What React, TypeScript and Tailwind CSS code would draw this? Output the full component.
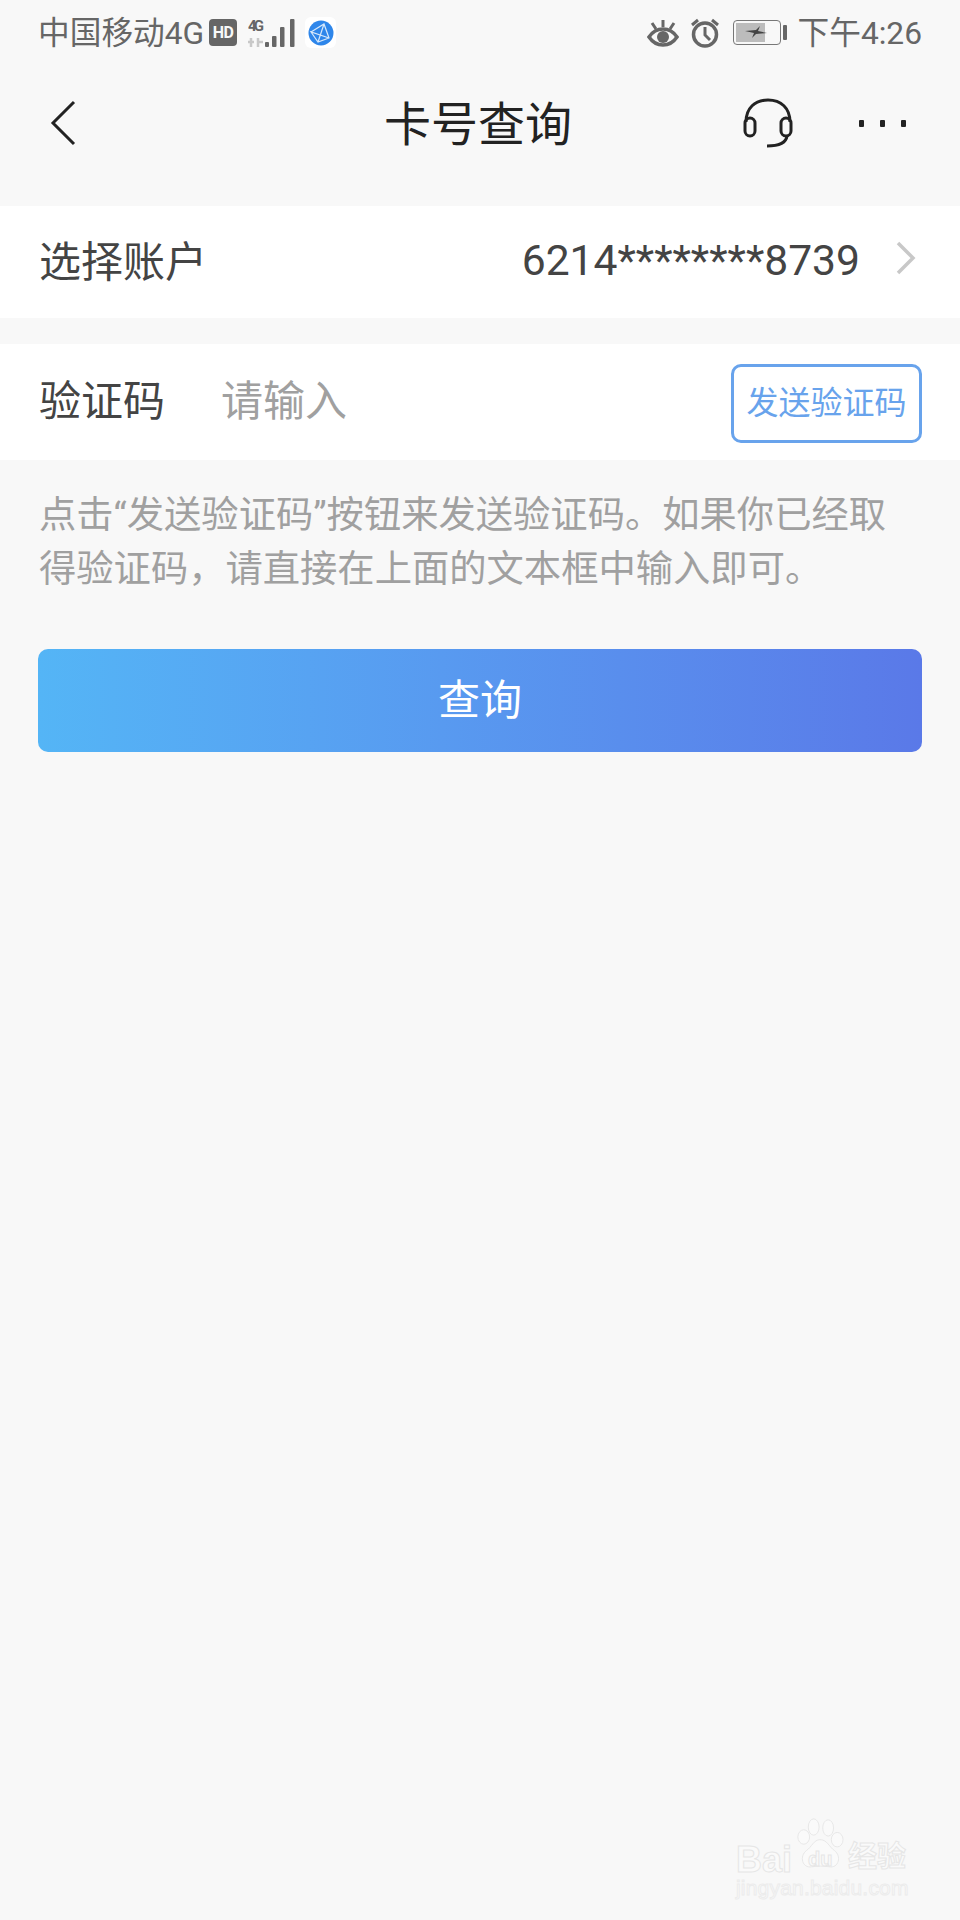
const cjk = "font-['Roboto','Noto_Sans_CJK_SC',sans-serif]"

function StatusLeft() {
  return (
    <div className="flex items-center">
      <span className="pt-[2px] text-[31.7px] leading-none text-[#666]">中国移动4G</span>
      <span className="ml-[5px] flex h-[27px] w-[28px] items-center justify-center rounded-[4px] bg-[#666] text-[16px] leading-none font-bold tracking-[-0.5px] text-[#f8f8f8]">
        HD
      </span>
      {/* signal */}
      <svg width="48" height="30" viewBox="0 0 48 30" className="ml-[11px]">
        <text x="0" y="13" fontSize="15" fontWeight="700" fill="#666" fontFamily="Roboto" textLength="16">4G</text>
        <path d="M3 20v9M0 24h6M10 20v9M10 24h5" stroke="#c8c8c8" strokeWidth="2.5" fill="none" />
        <rect x="17" y="24" width="4" height="5" rx="1" fill="#666" />
        <rect x="24" y="18" width="4.5" height="11" rx="1" fill="#666" />
        <rect x="32" y="9" width="4.5" height="20" rx="1" fill="#666" />
        <rect x="42" y="1" width="4.5" height="28" rx="1" fill="#666" />
      </svg>
      {/* browser app icon */}
      <span className="ml-[9px] flex h-[31px] w-[31px] items-center justify-center rounded-[6px] bg-white">
        <svg width="26" height="26" viewBox="0 0 26 26">
          <circle cx="13" cy="13" r="12.5" fill="#2e86ea" />
          <path d="M3 12L16 4L21 18L10 22L3 12L21 18M16 4L10 22" stroke="#d6e8fb" strokeWidth="1.2" fill="none" />
        </svg>
      </span>
    </div>
  )
}

function StatusRight() {
  return (
    <div className="flex items-center">
      <svg width="32" height="28" viewBox="0 0 32 28" fill="none" stroke="#666">
        <path d="M2 18C6 12 11 10 16 10C21 10 26 12 30 18C26 24 21 26 16 26C11 26 6 24 2 18Z" strokeWidth="3.5" />
        <circle cx="16" cy="18" r="6" fill="#666" stroke="none" />
        <path d="M16 1V8M5 4L9 10M27 4L23 10" strokeWidth="3" />
      </svg>
      <svg width="30" height="30" viewBox="0 0 30 30" fill="none" stroke="#666" className="ml-[11px]">
        <circle cx="15" cy="16.5" r="11.5" strokeWidth="3.5" />
        <path d="M15 9V17L20 22" strokeWidth="3" />
        <path d="M2 7L8 2M28 7L22 2" strokeWidth="3" />
      </svg>
      <div className="ml-[13px] flex items-center">
        <div className="relative h-[25px] w-[48px] overflow-hidden rounded-[4px] border-[1.5px] border-[#777] p-[2px]">
          <div className="h-full w-[29px] bg-[#bcbcbc]" />
          <svg width="22" height="12" viewBox="0 0 22 12" className="absolute top-[5px] left-[11px]">
            <path d="M0 5L11 4L15 0L13 5L22 7L11 8L7 12L9 7Z" fill="#444" />
          </svg>
        </div>
        <div className="ml-[2px] h-[15px] w-[4px] rounded-[1px] bg-[#666]" />
      </div>
      <span className="ml-[11px] pt-[2px] text-[31.7px] leading-none text-[#666]">下午4:26</span>
    </div>
  )
}

function Watermark() {
  return (
    <div className="absolute top-[1815px] left-[736px] h-[90px] w-[176px] text-[#fafafa]">
      <div className="absolute top-[28px] left-0 text-[36px] leading-[33px] font-bold font-['Liberation_Sans'] [-webkit-text-stroke:1px_#e6e6e6]">
        Bai
      </div>
      <svg width="52" height="56" viewBox="0 0 56 62" className="absolute top-[3px] left-[58px]" fill="#fafafa" stroke="#e6e6e6" strokeWidth="1">
        <ellipse cx="10" cy="21" rx="6.5" ry="8" />
        <ellipse cx="21" cy="10" rx="6" ry="9" />
        <ellipse cx="37" cy="11" rx="6" ry="9" />
        <ellipse cx="47" cy="24" rx="6.5" ry="8" />
        <path d="M28 24C36 24 38 32 44 36C52 42 49 56 38 54C32 53 25 53 19 54C8 56 5 42 13 36C19 32 21 24 28 24Z" />
      </svg>
      <div className="absolute top-[34px] left-[72px] text-[20px] leading-none font-bold font-['Liberation_Sans'] [-webkit-text-stroke:1px_#e6e6e6]">
        du
      </div>
      <div className="absolute top-[28px] left-[112px] text-[29px] leading-none font-bold [-webkit-text-stroke:1px_#e6e6e6]">
        经验
      </div>
      <div className="absolute top-[62px] left-0 text-[21px] leading-none font-['Liberation_Sans'] tracking-[0.2px] [-webkit-text-stroke:1px_#ececec]">
        jingyan.baidu.com
      </div>
    </div>
  )
}

export default function App() {
  return (
    <div className={`relative h-[1920px] w-[960px] overflow-hidden bg-[#f8f8f8] ${cjk}`}>
      <div className="flex h-[66px] items-center justify-between pr-[38px] pl-[38px]">
        <StatusLeft />
        <StatusRight />
      </div>

      {/* nav */}
      <div className="flex h-[114px] items-center pr-[54px] pl-[50px]">
        <div className="flex flex-1 items-center">
          <svg width="26" height="46" viewBox="0 0 26 46" fill="none" stroke="#222" strokeWidth="3">
            <path d="M24 2L3 23L24 44" />
          </svg>
        </div>
        <h1 className="pt-[2px] text-[47px] leading-none font-normal text-[#222]">卡号查询</h1>
        <div className="flex flex-1 items-center justify-end">
          <svg width="50" height="50" viewBox="0 0 50 50" fill="none" stroke="#222" strokeWidth="3">
            <path d="M3 24C3 10 12 2 25 2C38 2 47 10 47 24" />
            <rect x="2" y="20" width="10" height="18" rx="5" />
            <rect x="38" y="20" width="10" height="18" rx="5" />
            <path d="M44 38C43 45 36 48 24 48" />
          </svg>
          <div className="ml-[66px] flex gap-[16px]">
            <span className="h-[7px] w-[5px] rounded-[1px] bg-[#222]" />
            <span className="h-[7px] w-[5px] rounded-[1px] bg-[#222]" />
            <span className="h-[7px] w-[5px] rounded-[1px] bg-[#222]" />
          </div>
        </div>
      </div>

      <div className="mt-[26px] flex h-[112px] items-center justify-between bg-white pr-[43px] pl-[39px]">
        <span className="pt-[2px] text-[42px] leading-none text-[#444]">选择账户</span>
        <div className="flex items-center">
          <span className="mb-[3px] text-[42.6px] leading-none text-[#444]">6214********8739</span>
          <svg width="22" height="34" viewBox="0 0 22 34" fill="none" stroke="#c8c8c8" strokeWidth="3.5" className="mb-[8px] ml-[35px]">
            <path d="M3 2L18 17L3 32" />
          </svg>
        </div>
      </div>

      <div className="mt-[26px] flex h-[116px] items-center bg-white pr-[38px] pl-[39px]">
        <span className="text-[42px] leading-none text-[#444]">验证码</span>
        <span className="ml-[56px] text-[42px] leading-none text-[#a0a0a0]">请输入</span>
        <button className="mt-[2px] ml-auto flex h-[79px] w-[191px] items-center justify-center rounded-[10px] border-[3px] border-[#68a3ec] text-[32px] leading-none text-[#68a3ec]">
          发送验证码
        </button>
      </div>

      <p className="mt-[28px] w-[900px] pl-[39px] text-[37.3px] leading-[54px] text-[#a0a0a0]">
        点击“发送验证码”按钮来发送验证码。如果你已经取得验证码，请直接在上面的文本框中输入即可。
      </p>

      <button className="mx-[38px] mt-[53px] flex h-[103px] w-[884px] items-center justify-center rounded-[10px] bg-gradient-to-r from-[#54b5f6] to-[#5a79e8] text-[42px] leading-none text-white">
        查询
      </button>

      <Watermark />
    </div>
  )
}
